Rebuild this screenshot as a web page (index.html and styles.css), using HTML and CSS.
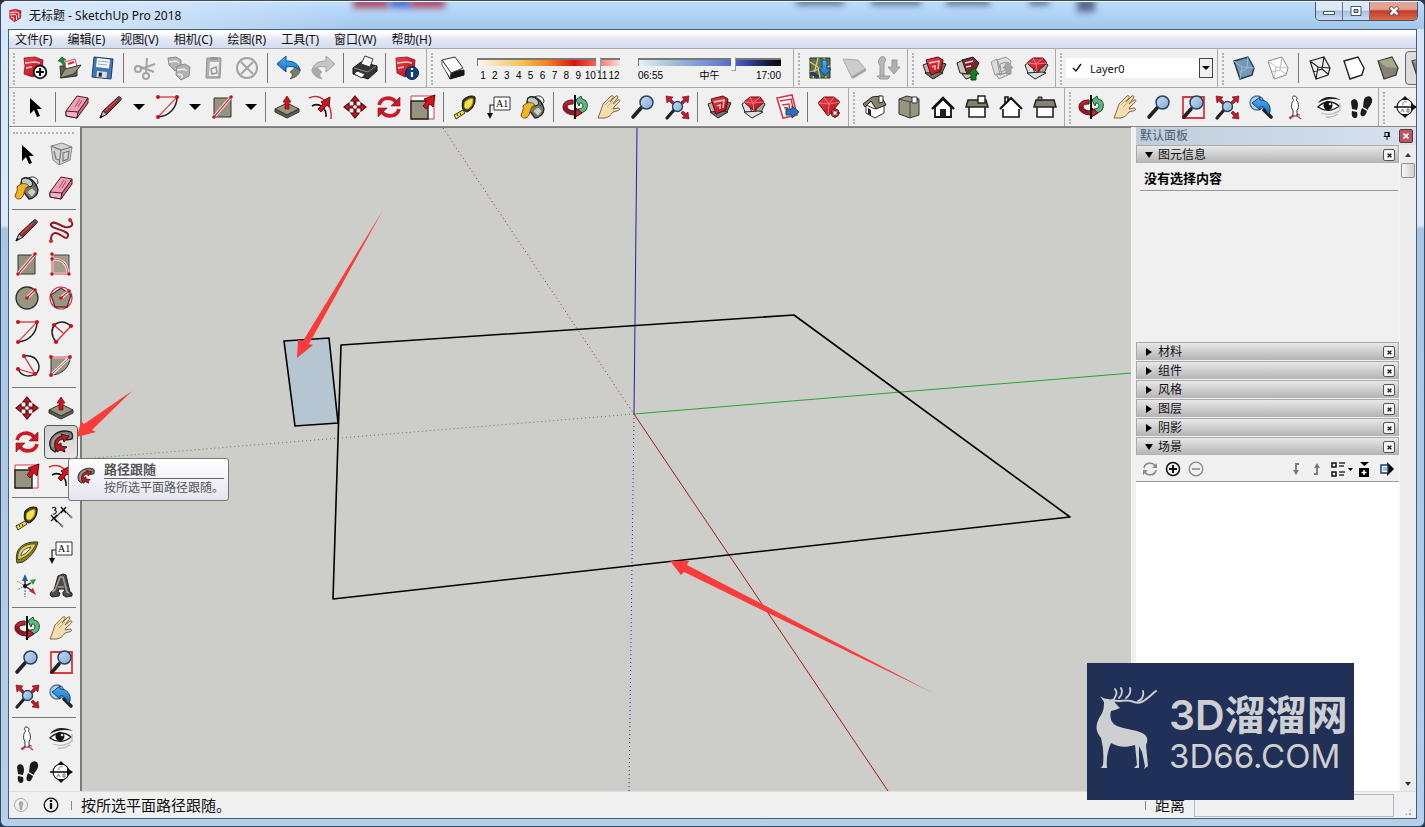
FILE: index.html
```html
<!DOCTYPE html>
<html lang="zh-CN">
<head>
<meta charset="utf-8">
<title>无标题 - SketchUp Pro 2018</title>
<link rel="stylesheet" href="styles.css">
</head>
<body>
<svg class="sprite" aria-hidden="true">
  <defs>
    <linearGradient id="gRed" x1="0" y1="0" x2="1" y2="1"><stop offset="0" stop-color="#f0424c"/><stop offset="1" stop-color="#a80c18"/></linearGradient>
    <linearGradient id="gBlue" x1="0" y1="0" x2="0" y2="1"><stop offset="0" stop-color="#4cb2f5"/><stop offset="1" stop-color="#1670c4"/></linearGradient>
    <linearGradient id="gLens" x1="0" y1="0" x2="1" y2="1"><stop offset="0" stop-color="#c4e0f5"/><stop offset="1" stop-color="#7fa9d0"/></linearGradient>
  </defs>
  <symbol id="su" viewBox="0 0 28 28"><path d="M3 4l11-2 9 3-1 13-11 6-8-6z" fill="url(#gRed)" stroke="#8c0d16" stroke-width=".8"/><path d="M4 8l10-1 5 2v9M4 12l8-1 3 2v8M5 16l5 1v5" fill="none" stroke="#fff" stroke-width="1.600"/></symbol>
  <symbol id="new" viewBox="0 0 28 28"><path d="M3 4l11-1 8 3-1 12-9 5-9-3 1-8z" fill="url(#gRed)" stroke="#8c0d16" stroke-width=".8"/><path d="M4 9l10-1 5 1M5 14l6-1" fill="none" stroke="#ffc9cc" stroke-width="1.600"/><circle cx="19" cy="18" r="6.300" fill="#fff" stroke="#111" stroke-width="1.800"/><path d="M19 14v8M15 18h8" stroke="#111" stroke-width="2.200"/></symbol>
  <symbol id="open" viewBox="0 0 28 28"><path d="M5 12h4l2 2h11v8L6 24z" fill="#5f5e50" stroke="#333"/><path d="M10 8l10-3 2 8-11 2z" fill="#fff" stroke="#c8454d"/><path d="M13 10l6-2" stroke="#d22" stroke-width="2"/><path d="M5 24l5-9 16-4-7 9z" fill="#989582" stroke="#3a392f"/><path d="M3 7l4-4 4 3-3 .5c2 2 2 4 1 7-1-3-2-5-4-6z" fill="#1f8a2c" stroke="#0d5216" stroke-width=".6"/></symbol>
  <symbol id="save" viewBox="0 0 28 28"><path d="M5 3l19 2-2 20-19-2z" fill="#3f78b4" stroke="#1c3f6b"/><path d="M8 4l13 1.400-1 9L7 13z" fill="#f4f6f8"/><path d="M9 7l10 1M9 10l9 1" stroke="#9ab"/><path d="M8 17l10 1-.6 6-10-1z" fill="#ddd"/><path d="M10 18.500l3 .3-.5 4-3-.3z" fill="#222"/></symbol>
  <symbol id="cut" viewBox="0 0 28 28"><g fill="none" stroke="#a3a3a3" stroke-width="2"><circle cx="7" cy="15" r="3"/><circle cx="15" cy="22" r="3"/><path d="M10 15l14-5M15 19l1-15M10 13l13 5"/></g></symbol>
  <symbol id="copy" viewBox="0 0 28 28"><g fill="#b3b3b3" stroke="#8b8b8b"><path d="M3 4l8-1 5 3v8l-6 3-6-6z"/><path d="M12 12l8-2 5 3-1 9-8 4-5-5z"/></g><path d="M4 8l7-1 3 2M12 16l7-1 3 2M13 20l4 1v3" fill="none" stroke="#eee" stroke-width="1.500"/></symbol>
  <symbol id="paste" viewBox="0 0 28 28"><path d="M8 4h14l-1 20H7z" fill="#b2b2b2" stroke="#8e8e8e"/><path d="M11 8h9l-1 14h-9z" fill="#eee"/><path d="M11 3h8v3h-8z" fill="#999"/><path d="M12 15l5-2 1 6-5 1z" fill="none" stroke="#999" stroke-width="1.500"/></symbol>
  <symbol id="delete" viewBox="0 0 28 28"><g fill="none" stroke="#a3a3a3" stroke-width="2"><circle cx="14" cy="14" r="10"/><path d="M8 8l12 12M20 8L8 20"/></g></symbol>
  <symbol id="undo" viewBox="0 0 28 28"><path d="M22 12c5 3 4 10-7 13 3-3 3-5 0-7z" fill="#7b7a6b" stroke="#444" stroke-width=".7"/><path d="M2 10l9-8v5c8 0 13 3 14 10-3-4-7-5-14-4v5z" fill="url(#gBlue)" stroke="#0e4c88"/></symbol>
  <symbol id="redo" viewBox="0 0 28 28"><path d="M6 12c-5 3-4 10 7 13-3-3-3-5 0-7z" fill="#a9a9a9" stroke="#999" stroke-width=".7"/><path d="M26 10l-9-8v5C9 7 4 10 3 17c3-4 7-5 14-4v5z" fill="#c6c6c6" stroke="#a2a2a2"/></symbol>
  <symbol id="print" viewBox="0 0 28 28"><path d="M2 14l8-6 16 4v5l-9 8-15-5z" fill="#353535" stroke="#111"/><path d="M3 14l14 4 8-6" fill="none" stroke="#8c8c8c"/><path d="M10 10l4-8 8 3-3 8z" fill="#fff" stroke="#333"/><path d="M3 20l3-3 8 3-3 4z" fill="#fff" stroke="#333"/></symbol>
  <symbol id="info" viewBox="0 0 28 28"><path d="M3 4l11-1 8 3-1 12-9 5-8-4z" fill="url(#gRed)" stroke="#8c0d16" stroke-width=".8"/><path d="M4 9l10-1 5 1M5 14l6-1" fill="none" stroke="#ffc9cc" stroke-width="1.600"/><circle cx="19" cy="19" r="6.500" fill="#12407c" stroke="#0b2850"/><path d="M19 18v5M19 14v2" stroke="#fff" stroke-width="2.200"/></symbol>
  <symbol id="shadow" viewBox="0 0 28 28"><path d="M3 8l8 17 14-4v-5l-12 2z" fill="#181818" stroke="#111"/><path d="M3 6l13-3 8 11-12 5z" fill="#fff" stroke="#333"/><path d="M3 6v5l8 13 1-5z" fill="#fff" stroke="#333" stroke-width=".8"/></symbol>
  <symbol id="select" viewBox="0 0 28 28"><path d="M9 5v16l4-4 3 7 3-1-3-7h5z" fill="#000"/></symbol>
  <symbol id="eraser" viewBox="0 0 28 28"><path d="M3 18L14 3l11 2-9 14-2 6-11-2z" fill="#f0a0b6" stroke="#4c1b28"/><path d="M3 18l12 1-1 6-11-2z" fill="#f4b3c4" stroke="#4c1b28"/><path d="M15 19L25 5v5L14 25z" fill="#cc6a86" stroke="#4c1b28"/><path d="M12 14l5-8M15 14l4-7" stroke="#a84c66"/></symbol>
  <symbol id="pencil" viewBox="0 0 28 28"><path d="M3 25l3-7L21 4c2-1 4 1 3 3L10 21z" fill="#9f2930" stroke="#391114"/><path d="M3 25l3-7 4 3z" fill="#c8b79f" stroke="#333"/><path d="M3 25l1-3 2 1.500z" fill="#000"/><path d="M8 18L20 7" stroke="#e0636a"/><path d="M19 6l2-2c2-1 4 1 3 3l-2 2z" fill="#555"/></symbol>
  <symbol id="arc" viewBox="0 0 28 28"><path d="M24 4c0 11-8 19-19 20" fill="none" stroke="#222" stroke-width="1.500"/><path d="M5 4h19L5 24" fill="none" stroke="#dd4a52" stroke-width="1.300"/><g fill="#c4131f"><circle cx="5" cy="4" r="2"/><circle cx="24" cy="4" r="2"/><circle cx="5" cy="24" r="2"/></g></symbol>
  <symbol id="rect" viewBox="0 0 28 28"><path d="M5 5h17v19H5z" fill="#95927e" stroke="#333"/><path d="M5 24L22 4" stroke="#fff" stroke-width="3"/><path d="M5 24L22 4" stroke="#d8323c" stroke-width="1.300"/><circle cx="5" cy="24" r="1.800" fill="#c4131f"/><circle cx="22" cy="4" r="1.800" fill="#c4131f"/></symbol>
  <symbol id="pushpull" viewBox="0 0 28 28"><path d="M2 16l12-6 12 6-12 6z" fill="#98957f" stroke="#333"/><path d="M2 16v3l12 6 12-6v-3l-12 6z" fill="#625f50" stroke="#333"/><path d="M14 3l4 6h-2v7h-4V9h-2z" fill="#d1141f" stroke="#70090f" stroke-width=".7"/></symbol>
  <symbol id="offset" viewBox="0 0 28 28"><path d="M2 5C13 0 26 10 24 26" fill="none" stroke="#cf2b35" stroke-width="1.500"/><path d="M5 13c7-4 15 2 14 11" fill="none" stroke="#111" stroke-width="1.500"/><path d="M11 16l5-5-2-2 9-5-1 10-2-2-6 7z" fill="#d1141f" stroke="#70090f"/></symbol>
  <symbol id="move" viewBox="0 0 28 28"><path d="M14 3l4 5h-3v5h5v-3l5 4-5 4v-3h-5v5h3l-4 5-4-5h3v-5H8v3l-5-4 5-4v3h5V8h-3z" fill="#c81a24" stroke="#5d0a10" stroke-width="1.200"/><circle cx="14" cy="14" r="1.800" fill="#f1f1f1"/></symbol>
  <symbol id="rotate" viewBox="0 0 28 28"><g fill="none" stroke="#cb1a25" stroke-width="3.600"><path d="M4 12C6 4 16 3 21 9"/><path d="M24 16c-2 8-12 9-17 3"/></g><path d="M25 4v9h-9z" fill="#cb1a25" stroke="#7c0d15" stroke-width=".6"/><path d="M3 24v-9h9z" fill="#cb1a25" stroke="#7c0d15" stroke-width=".6"/></symbol>
  <symbol id="scale" viewBox="0 0 28 28"><path d="M2 3h23v23H2z" fill="#fff" stroke="#cf3b43"/><path d="M2 8h17v18H2z" fill="#96937f" stroke="#222" stroke-width="1.400"/><path d="M14 13l4-5-3-2 11-4-2 12-3-3-4 5z" fill="#d1141f" stroke="#70090f"/></symbol>
  <symbol id="tape" viewBox="0 0 28 28"><path d="M12 7c4-4 9-5 12-3 1 7-3 13-8 15-4-1-6-4-4-12z" fill="#3c3a20" stroke="#111"/><path d="M14 9c3-3 6-4 8-3 0 5-2 9-6 10-3 0-3-3-2-7z" fill="#f3e24a" stroke="#c3a719"/><path d="M3 22l9-5 2 3-9 6z" fill="#f2dc28" stroke="#333"/><path d="M6 21l1 2M9 20l1 2" stroke="#333"/></symbol>
  <symbol id="note" viewBox="0 0 28 28"><path d="M9 4h16v13H9z" fill="#fff" stroke="#333"/><path d="M9 12H5v10" fill="none" stroke="#222" stroke-width="1.200"/><path d="M2 20h6l-3 6z" fill="#111"/></symbol>
  <symbol id="paint" viewBox="0 0 28 28"><path d="M9 5c6-4 14 2 16 11 0 5-5 9-9 9L7 13z" fill="#6e7873" stroke="#222" stroke-width="1.300"/><ellipse cx="14" cy="8.500" rx="6" ry="4" transform="rotate(25 14 8.500)" fill="#bfc9c5" stroke="#222"/><path d="M14 5c5-4 11-2 11 4l-4 4" fill="none" stroke="#333"/><path d="M4 13c5-5 9-4 12-1-4 1-4 4-6 10-2 4-7 4-8 0 1-3 3-5 2-9z" fill="#efb525" stroke="#795411"/><path d="M14 18l5-4 4 4-4 5z" fill="#d5cfb0" stroke="#666" stroke-width=".6"/></symbol>
  <symbol id="orbit" viewBox="0 0 28 28"><path d="M15 7l5-4 1 3c5 1 6 5 5 9-1 3-4 5-8 5l-1-4c3 0 5-1 5-3s-1-3-3-3l-1 3z" fill="#5fb783" stroke="#174f2c"/><path d="M12 7C5 7 2 10 2 14c0 5 6 8 12 8l-1 3 8-5-6-5v3c-5 0-8-1-9-4 0-2 2-3 6-3z" fill="#c3202e" stroke="#4d0a12"/><path d="M2 14c0 5 5 7 10 8v-4c-4-1-8-3-6-7z" fill="#8e1622"/><path d="M14 2v24" stroke="#111" stroke-width="2"/></symbol>
  <symbol id="pan" viewBox="0 0 28 28"><path d="M3 25l3-8 2-6 8-8c1.500-1 2.500 0 2 1.500L15 9l6-6c1.500-1 2.500.5 1.500 2L18 11l5-4c2-.8 2.500 1 1 2.300L19 14l-1 2 5-1c2 0 2 2 .5 2.500L18 19c-2 3-4 5-8 6z" fill="#f4ddb0" stroke="#7b6c4b"/><path d="M10 12l5-5M12 14l6-6" stroke="#b39c6b" stroke-width=".7"/></symbol>
  <symbol id="zoom" viewBox="0 0 28 28"><path d="M4 24l8-9" stroke="#222" stroke-width="3.600" stroke-linecap="round"/><circle cx="17.500" cy="9.500" r="6.500" fill="url(#gLens)" stroke="#28445f" stroke-width="1.500"/></symbol>
  <symbol id="zoomwin" viewBox="0 0 28 28"><path d="M4 4h21v21H4z" fill="none" stroke="#dc3741" stroke-width="1.800"/><path d="M5 24l7-8" stroke="#222" stroke-width="3.600" stroke-linecap="round"/><circle cx="17.500" cy="9.500" r="6.500" fill="url(#gLens)" stroke="#28445f" stroke-width="1.500"/></symbol>
  <symbol id="extents" viewBox="0 0 28 28"><path d="M4 25l7-8" stroke="#222" stroke-width="3.200" stroke-linecap="round"/><circle cx="14.500" cy="13.500" r="5" fill="url(#gLens)" stroke="#28445f" stroke-width="1.400"/><g fill="#c5192a" stroke="#6a0b16" stroke-width=".6"><path d="M3 3l7 1-2 2 3 3-2 2-3-3-2 2z"/><path d="M26 3l-7 1 2 2-3 3 2 2 3-3 2 2z"/><path d="M26 26l-7-1 2-2-3-3 2-2 3 3 2-2z"/></g></symbol>
  <symbol id="previous" viewBox="0 0 28 28"><circle cx="10" cy="10" r="7" fill="#b6d2ea" stroke="#56738e" stroke-width="1.400"/><path d="M17 17l7 7" stroke="#222" stroke-width="3.600" stroke-linecap="round"/><path d="M5 10l8-6v3c7 0 11 5 10 12l-2 2-2-4c-2-3-4-4-6-3v3z" fill="url(#gBlue)" stroke="#0e3f73"/></symbol>
  <symbol id="comp" viewBox="0 0 28 28"><path d="M3 11l5-2 4 12-6-2z" fill="#b9b6aa" stroke="#222"/><path d="M20 8l6 2-4 9-5 3z" fill="#77756b" stroke="#222"/><path d="M5 19l15-1 3 1-10 6z" fill="#74726a" stroke="#222"/><path d="M6 6l12-3 5 3-2 11-10 4z" fill="url(#gRed)" stroke="#550a10"/><path d="M9 9l10-2-1 8M12 13l3-1v4" fill="none" stroke="#ffd9da" stroke-width="1.300"/></symbol>
  <symbol id="gembox" viewBox="0 0 28 28"><path d="M3 11l6-4 4 13-7-1z" fill="#e2dfd8" stroke="#222"/><path d="M19 6l7 5-4 8-6 2z" fill="#aaa79b" stroke="#222"/><path d="M5 19l15-1 4 1-11 6z" fill="#ddd" stroke="#222"/><path d="M5 9l6-5 10 0 4 5-10 9z" fill="url(#gRed)" stroke="#550a10"/><path d="M5 9l9 1 11-1M11 4l3 6 7-6M14 10l1 8" fill="none" stroke="#ff9298" stroke-width=".8"/></symbol>
  <symbol id="upload" viewBox="0 0 28 28"><path d="M3 9l6-3 5 14-8-1zM8 20l12-1 3 2-11 4z" fill="#c8c5bb" stroke="#222"/><path d="M8 6l11-3 6 6-4 8-8 3z" fill="#7c272b" stroke="#222"/><path d="M11 9l8-2M12 13l5-1" stroke="#ddd" stroke-width="1.500"/><path d="M20 14l5 6h-3v6h-5v-6h-3z" fill="#168126" stroke="#0a4b14"/></symbol>
  <symbol id="uploadoff" viewBox="0 0 28 28"><g fill="#dcdcdc" stroke="#999"><path d="M3 8l6-3 5 15-7 1zM8 20l11-1 3 1-11 5zM9 6l9-3 5 4-3 11-8 3z"/><path d="M12 10l6-2-1 8-4 2z"/><path d="M20 8l5 6h-2v6h-5v-6h-3z" fill="#a5a5a5"/></g></symbol>
  <symbol id="layout" viewBox="0 0 28 28"><path d="M4 5l15-3 5 20-14 3z" fill="#fff" stroke="#d53640" stroke-width="1.600"/><path d="M7 8l11-2 2 9M9 12l7-1 1 7M11 15l3-.5 1 4" fill="none" stroke="#d53640" stroke-width="1.500"/><path d="M13 16h6v-3l7 6-7 6v-3h-6z" fill="#2672bd" stroke="#173c66"/></symbol>
  <symbol id="gem" viewBox="0 0 28 28"><path d="M3 10l6-6h10l6 5-12 14z" fill="url(#gRed)" stroke="#6d0a12"/><path d="M3 10l11 1 11-2M9 4l5 7 5-7M14 11l-1 12" fill="none" stroke="#ff858d" stroke-width=".8"/><circle cx="20" cy="20" r="4" fill="#c24a53" stroke="#7e1b22"/><path d="M20 15v10M15 20h10" stroke="#7e1b22" stroke-width="1.500"/><circle cx="20" cy="20" r="1.700" fill="#fff"/></symbol>
  <symbol id="iso" viewBox="0 0 28 28"><path d="M5 12l9 4 9-4v8l-9 5-9-5z" fill="#fff" stroke="#333"/><path d="M2 11l9-7 9-1 5 9-10 4-5-8-6 6z" fill="#85826f" stroke="#222"/><path d="M18 3h4v6l-4 1z" fill="#fff" stroke="#333"/><path d="M7 15l3 2v6l-3-2z" fill="#222"/></symbol>
  <symbol id="top" viewBox="0 0 28 28"><path d="M4 6l8-3 12 3v16l-9 3-11-4z" fill="#98957f" stroke="#333"/><path d="M4 6l11 3v16M15 9l9-3" fill="none" stroke="#444"/><path d="M17 4h5v6h-5z" fill="#fff" stroke="#333"/></symbol>
  <symbol id="front" viewBox="0 0 28 28"><path d="M6 14l8-8 8 8v10H6z" fill="#fff" stroke="#111" stroke-width="1.800"/><path d="M3 16L14 5l11 11" fill="none" stroke="#111" stroke-width="2.400"/><path d="M11 16h6v8h-6z" fill="#222"/></symbol>
  <symbol id="right" viewBox="0 0 28 28"><path d="M6 13h16v11H6z" fill="#fff" stroke="#222" stroke-width="1.600"/><path d="M5 7h18l2 7H3z" fill="#85826f" stroke="#222" stroke-width="1.500"/><path d="M15 3h7v7h-7z" fill="#fff" stroke="#222" stroke-width="1.400"/></symbol>
  <symbol id="back" viewBox="0 0 28 28"><path d="M6 15v9h16v-9M8 10V4h3v4" fill="#fff" stroke="#111" stroke-width="1.600"/><path d="M3 16L14 5l11 11" fill="#fff" stroke="#111" stroke-width="2.200"/></symbol>
  <symbol id="left" viewBox="0 0 28 28"><path d="M6 13h16v11H6z" fill="#fff" stroke="#222" stroke-width="1.600"/><path d="M5 7h18l2 7H3z" fill="#85826f" stroke="#222" stroke-width="1.500"/><path d="M7 4h4v3H7z" fill="#85826f" stroke="#222"/></symbol>
  <symbol id="person" viewBox="0 0 28 28"><path d="M8 25l6-4 6 5M9 26l5-5 5 1" fill="none" stroke="#d92a36" stroke-width="1.200"/><path d="M13 3c3 0 4 3 2 4 2 1 3 5 2 9l-1 1v6h-4v-6l-1-1c-1-4 0-8 2-9-2-1-2-4 0-4z" fill="#fff" stroke="#333"/></symbol>
  <symbol id="eye" viewBox="0 0 28 28"><path d="M3 10C8 2 19 3 26 7c-8-2-16-1-23 3z" fill="#222"/><path d="M3 14c6-6 14-7 21-1-6 5-14 6-21 1z" fill="#fff" stroke="#222" stroke-width="1.400"/><circle cx="13" cy="12.500" r="4.500" fill="#111"/><circle cx="15" cy="11" r="1.300" fill="#ddd"/><path d="M6 20c6 2 13 2 19-3M11 24c5 1 9-1 12-3M25 10v8" fill="none" stroke="#bbb" stroke-width="1.300"/></symbol>
  <symbol id="walk" viewBox="0 0 28 28"><path d="M5 7c4-2 6 1 6 5 0 2-1 4-1 5l-5-1c0-3-2-7 0-9zM5 18l5 1c1 4 0 6-2 6s-4-2-3-7zM19 4c4-2 7 1 6 5s-4 5-4 8l-5-3c1-5 0-8 3-10zM15 15l5 3c-1 4-3 6-5 5-2 0-2-4 0-8z" fill="#1b1b1b"/></symbol>
  <symbol id="section" viewBox="0 0 28 28"><circle cx="14" cy="14" r="8" fill="#fff" stroke="#222" stroke-width="1.200"/><path d="M3 14h22" stroke="#111" stroke-width="1.600"/><path d="M14 3l4 4h-8zM14 25l4-4h-8zM26 14l-6-4v8z" fill="#111"/><path d="M12 12c-1-3 2-4 4-3M10 19l1.500-3 1.500 3M16 16v3h2v-3z" fill="none" stroke="#777"/></symbol>
  <symbol id="mapadd" viewBox="0 0 28 28"><path d="M4 4h20v20H4z" fill="#647146" stroke="#263021"/><path d="M4 8l8 5 2 11M12 4L7 24M4 18l20-6M18 4l2 20" fill="none" stroke="#d9ce91" stroke-width="1.200"/><path d="M4 20c5-2 6 1 8 4" stroke="#233f66" stroke-width="3"/><path d="M16 6h5v9h4l-6 7-6-7h3z" fill="url(#gBlue)" stroke="#164a80"/></symbol>
  <symbol id="terrain" viewBox="0 0 28 28"><path d="M3 5l15 1 8 10-14 8z" fill="#ccc" stroke="#aaa"/><path d="M12 22l14-8v3l-13 8z" fill="#a5a5a5"/></symbol>
  <symbol id="geo" viewBox="0 0 28 28"><path d="M7 3c4-2 6 3 3 6v13H6V11C4 9 4 5 7 3zM3 22h13l-2 3H6z" fill="#b9b9b9" stroke="#999"/><path d="M18 6h5v7h3l-6 7-6-7h4z" fill="#b1b1b1" stroke="#999"/></symbol>
  <symbol id="xray" viewBox="0 0 28 28"><path d="M4 7l14-4 6 11-2 7-12 4z" fill="#7798b3" stroke="#213a50" stroke-width="1.400"/><path d="M4 7l8 6 12 1M12 13l-2 12M18 3l-1 12-7 3" fill="none" stroke="#9cbad2"/></symbol>
  <symbol id="backedge" viewBox="0 0 28 28"><g fill="#fff" stroke="#888"><path d="M4 7l14-4 6 11-2 7-12 4z"/><path d="M4 7l8 6 12 1M12 13l-2 12M18 3l-2 13 6 4M16 16l-8 2" fill="none" stroke="#bbb"/></g></symbol>
  <symbol id="wire" viewBox="0 0 28 28"><path d="M4 7l14-4 6 11-2 7-12 4zM4 7l8 6 12 1M12 13l-2 12M18 3l-2 12 6 5M16 15l-9 3" fill="none" stroke="#222" stroke-width="1.200"/></symbol>
  <symbol id="hidden" viewBox="0 0 28 28"><path d="M4 7l14-4 6 11-2 7-12 4z" fill="#fff" stroke="#222" stroke-width="1.400"/></symbol>
  <symbol id="shaded" viewBox="0 0 28 28"><path d="M4 7l14-4 6 11-2 7-12 4z" fill="#858371" stroke="#3a392f" stroke-width="1.200"/><path d="M5 7l13-3 5 10-11-1z" fill="#aaa78f"/></symbol>
  <symbol id="makecomp" viewBox="0 0 28 28"><path d="M4 6l11-3 10 4-2 13-11 5-6-5z" fill="#d2d2d2" stroke="#888"/><path d="M4 6l10 4 11-3M14 10l-2 15M7 11l2 8 3 1M16 13l6-2-1 8-5 2z" fill="none" stroke="#777" stroke-width="1.200"/></symbol>
  <symbol id="freehand" viewBox="0 0 28 28"><path d="M23 4C28 9 24 12 18 11C12 9 6 4 4 8C2 13 23 14 21 20C19 26 13 16 8 17C4 18 4 21 4 25" fill="none" stroke="#8c1d25" stroke-width="2"/><circle cx="23" cy="4" r="2" fill="#d5222d"/><circle cx="4" cy="25" r="2" fill="#d5222d"/></symbol>
  <symbol id="rotrect" viewBox="0 0 28 28"><path d="M5 5h17v19H5z" fill="#a29c8a" stroke="#444"/><path d="M5 24V4M5 9c10 0 15 4 16 14M5 24h17" fill="none" stroke="#fff" stroke-width="2.600"/><path d="M5 24V4M5 9c10 0 15 4 16 14M5 24h17" fill="none" stroke="#d8323c"/><g fill="#c4131f"><circle cx="5" cy="4" r="1.700"/><circle cx="5" cy="9" r="1.700"/><circle cx="5" cy="24" r="1.700"/><circle cx="22" cy="24" r="1.700"/></g></symbol>
  <symbol id="circle" viewBox="0 0 28 28"><circle cx="14" cy="14" r="11" fill="#989681" stroke="#333" stroke-width="1.300"/><path d="M14 14l8-8" stroke="#fff" stroke-width="3"/><path d="M14 14l8-8" stroke="#d5202c" stroke-width="1.200"/><circle cx="14" cy="14" r="1.800" fill="#c4131f"/><circle cx="22" cy="6" r="1.800" fill="#c4131f"/></symbol>
  <symbol id="polygon" viewBox="0 0 28 28"><circle cx="14" cy="14" r="11" fill="none" stroke="#cf3640" stroke-width="1.200"/><path d="M4 11l10-7 10 7-4 12H8z" fill="#989681" stroke="#672a2d" stroke-width="1.300"/><path d="M14 14l8-7" stroke="#fff" stroke-width="3"/><path d="M14 14l8-7" stroke="#d5202c" stroke-width="1.200"/><circle cx="14" cy="14" r="1.800" fill="#c4131f"/><circle cx="22" cy="7" r="1.800" fill="#c4131f"/></symbol>
  <symbol id="arc2" viewBox="0 0 28 28"><path d="M9 24C-2 10 12-3 24 8" fill="none" stroke="#222" stroke-width="1.500"/><path d="M9 24L24 8M7 7l9 8" stroke="#d52b36" stroke-width="1.300"/><g fill="#c4131f"><circle cx="9" cy="24" r="2.100"/><circle cx="24" cy="8" r="2.100"/><circle cx="7" cy="7" r="2.100"/></g></symbol>
  <symbol id="arc3" viewBox="0 0 28 28"><path d="M11 4c15-2 19 14 11 18C16 26 8 24 5 17" fill="none" stroke="#222" stroke-width="1.500"/><path d="M11 4l11 18L5 17" fill="none" stroke="#d52b36" stroke-width="1.300"/><g fill="#c4131f"><circle cx="11" cy="4" r="2.100"/><circle cx="22" cy="22" r="2.100"/><circle cx="5" cy="17" r="2.100"/></g></symbol>
  <symbol id="pie" viewBox="0 0 28 28"><path d="M4 5h19c0 10-8 18-19 18z" fill="#989681" stroke="#333"/><path d="M4 23L23 5H4" fill="none" stroke="#fff" stroke-width="2.600"/><path d="M4 23L23 5H4" fill="none" stroke="#d8323c"/><g fill="#c4131f"><circle cx="4" cy="5" r="1.900"/><circle cx="23" cy="5" r="1.900"/><circle cx="4" cy="23" r="1.900"/></g></symbol>
  <symbol id="follow" viewBox="0 0 28 28"><path d="M4 21C-1 10 11 0 24 4c2 2 2 4 1 7l-5 1c-1-3-2-4-5-3-5 2-7 6-5 11l-2 4z" fill="#7e7973" stroke="#222" stroke-width="1.300"/><path d="M6 19C4 10 12 4 21 7" fill="none" stroke="#a8a39b" stroke-width="1.500"/><path d="M8 19c-1-6 2-10 7-11l-1-2 8 2-5 6-1-3c-4 1-6 3-5 6l3-2v3l6 1-3 2 1 3-5-2-3 2z" fill="#b81c28" stroke="#4c0a10"/></symbol>
  <symbol id="dimension" viewBox="0 0 28 28"><path d="M7 15l9-9M7 14l8 8M16 5l8 8" stroke="#444" stroke-width="1.200"/><path d="M4 11l6 7M4 17l6-6M14 3l5 6M14 9l5-6" stroke="#111" stroke-width="1.300"/><path d="M5 4c4-2 5 2 2 2 4 0 2 5-1 4" fill="none" stroke="#222" stroke-width="1.200"/><path d="M14 21l2 2M23 12l2 2" stroke="#5da05e" stroke-width="2"/></symbol>
  <symbol id="protractor" viewBox="0 0 28 28"><path d="M4 25C1 12 9 3 25 4 23 14 15 21 10 24z" fill="#8e811c" stroke="#333"/><path d="M5 22C3 12 11 5 23 6 20 13 14 19 5 22z" fill="#ddcc4e" stroke="#544d0e"/><path d="M8 18c0-4 4-8 10-9-2 4-6 7-10 9z" fill="#f1f1f1" stroke="#555"/></symbol>
  <symbol id="axes" viewBox="0 0 28 28"><path d="M12 14V6M12 14l6-3M12 14l6 4" stroke="#333" stroke-width="1.500"/><path d="M12 2l3 7H9z" fill="#205f92"/><path d="M17 8l6-1-3 6z" fill="#2e9c40"/><path d="M16 19l4-3 3 7z" fill="#c02a31"/><path d="M12 15v10" stroke="#84b0da" stroke-width="2" stroke-dasharray="2 1"/><path d="M4 9l8 5-8 4" fill="none" stroke="#bd6c6c" stroke-dasharray="2 1"/><circle cx="12" cy="14" r="2" fill="#111"/></symbol>
  <symbol id="threed" viewBox="0 0 28 28"><path d="M4 20l3-2 4-14 5-2 3 1 4 17 2 1v3l-6 1-3-2v-3l2-1-1-2h-5l-1 3 2 1-1 3-7 1-2-2z" fill="#4f4a45" stroke="#222"/><path d="M5 20l3-2 5-13h3l4 15 2 1M11 15h6" fill="none" stroke="#a59f97" stroke-width="1.600"/></symbol>
  <symbol id="check" viewBox="0 0 12 12"><path d="M2 6l3 3 5-7" fill="none" stroke="#111" stroke-width="1.400"/></symbol>
  <symbol id="x" viewBox="0 0 12 12"><path d="M4 4l4 4M8 4l-4 4" stroke="#222" stroke-width="1.600"/></symbol>
</svg>

<div class="window">
  <header class="titlebar">
    <i class="smudge smudge-red"></i><i class="smudge smudge-blue"></i><i class="smudge smudge-red smudge-red-end"></i>
    <i class="smudge smudge-dark s1"></i><i class="smudge smudge-dark s2"></i><i class="smudge smudge-dark s3"></i><i class="smudge smudge-dark s4"></i><i class="smudge smudge-dark s5"></i>
    <svg class="app-icon"><use href="#su"/></svg>
    <h1 class="title">无标题 - SketchUp Pro 2018</h1>
    <div class="caption-buttons">
      <button class="cap cap-min" aria-label="最小化"><svg viewBox="0 0 14 10"><path d="M1.500 5.500h11v3h-11z" fill="#fff" stroke="#44566b"/></svg></button>
      <button class="cap cap-max" aria-label="最大化"><svg viewBox="0 0 14 10"><path d="M2 .5h10v9H2z" fill="#fff" stroke="#44566b"/><path d="M5 3.500h4v3H5z" fill="#9db6d2" stroke="#44566b"/></svg></button>
      <button class="cap cap-close" aria-label="关闭"><svg viewBox="0 0 14 10"><path d="M3 1l8 8M11 1L3 9" stroke="#5a3838" stroke-width="4"/><path d="M3.500 1.500l7 7M10.500 1.500l-7 7" stroke="#fff" stroke-width="2.500"/></svg></button>
    </div>
  </header>

  <div class="client">
    <nav class="menubar">
      <button>文件(F)</button><button>编辑(E)</button><button>视图(V)</button><button>相机(C)</button><button>绘图(R)</button><button>工具(T)</button><button>窗口(W)</button><button>帮助(H)</button>
    </nav>

    <div class="toolbar">
      <div class="group">
        <button class="tool" aria-label="新建"><svg><use href="#new"/></svg></button>
        <button class="tool" aria-label="打开"><svg><use href="#open"/></svg></button>
        <button class="tool" aria-label="保存"><svg><use href="#save"/></svg></button>
        <span class="sep"></span>
        <button class="tool" aria-label="剪切"><svg><use href="#cut"/></svg></button>
        <button class="tool" aria-label="复制"><svg><use href="#copy"/></svg></button>
        <button class="tool" aria-label="粘贴"><svg><use href="#paste"/></svg></button>
        <button class="tool" aria-label="删除"><svg><use href="#delete"/></svg></button>
        <span class="sep"></span>
        <button class="tool" aria-label="撤销"><svg><use href="#undo"/></svg></button>
        <button class="tool" aria-label="重做"><svg><use href="#redo"/></svg></button>
        <span class="sep"></span>
        <button class="tool" aria-label="打印"><svg><use href="#print"/></svg></button>
        <span class="sep"></span>
        <button class="tool" aria-label="模型信息"><svg><use href="#info"/></svg></button>
      </div>
      <div class="group">
        <button class="tool" aria-label="阴影"><svg><use href="#shadow"/></svg></button>
        <div class="sliders">
          <div class="slider">
            <input class="range range-month" type="range" min="0" max="100" value="86" aria-label="日期">
            <div class="ticks"><span>1</span><span>2</span><span>3</span><span>4</span><span>5</span><span>6</span><span>7</span><span>8</span><span>9</span><span>10</span><span>11</span><span>12</span></div>
          </div>
          <div class="slider">
            <input class="range range-time" type="range" min="0" max="100" value="67" aria-label="时间">
            <div class="times"><span>06:55</span><span>中午</span><span>17:00</span></div>
          </div>
        </div>
      </div>
      <div class="group">
        <button class="tool" aria-label="添加位置"><svg><use href="#mapadd"/></svg></button>
        <button class="tool" aria-label="切换地形"><svg><use href="#terrain"/></svg></button>
        <button class="tool" aria-label="照片纹理"><svg><use href="#geo"/></svg></button>
      </div>
      <div class="group">
        <button class="tool" aria-label="获取模型"><svg><use href="#comp"/></svg></button>
        <button class="tool" aria-label="共享模型"><svg><use href="#upload"/></svg></button>
        <button class="tool" aria-label="共享组件"><svg><use href="#uploadoff"/></svg></button>
        <button class="tool" aria-label="扩展程序库"><svg><use href="#gembox"/></svg></button>
      </div>
      <div class="group">
        <div class="layer">
          <svg class="layer-check"><use href="#check"/></svg>
          <select aria-label="图层"><option>Layer0</option></select>
          <span class="layer-arrow"></span>
        </div>
      </div>
      <div class="group">
        <button class="tool" aria-label="X 光透视"><svg><use href="#xray"/></svg></button>
        <button class="tool" aria-label="后边线"><svg><use href="#backedge"/></svg></button>
        <span class="sep"></span>
        <button class="tool" aria-label="线框"><svg><use href="#wire"/></svg></button>
        <button class="tool" aria-label="消隐"><svg><use href="#hidden"/></svg></button>
        <button class="tool" aria-label="阴影模式"><svg><use href="#shaded"/></svg></button>
        <button class="tool pressed" aria-label="材质贴图"><svg><use href="#shaded"/></svg></button>
      </div>
    </div>

    <div class="toolbar">
      <div class="group">
        <button class="tool" aria-label="选择"><svg><use href="#select"/></svg></button>
        <span class="sep"></span>
        <button class="tool" aria-label="擦除"><svg><use href="#eraser"/></svg></button>
        <button class="tool" aria-label="直线"><svg><use href="#pencil"/></svg></button>
        <button class="more" aria-label="更多直线"></button>
        <button class="tool" aria-label="圆弧"><svg><use href="#arc"/></svg></button>
        <button class="more" aria-label="更多圆弧"></button>
        <button class="tool" aria-label="矩形"><svg><use href="#rect"/></svg></button>
        <button class="more" aria-label="更多形状"></button>
        <span class="sep"></span>
        <button class="tool" aria-label="推拉"><svg><use href="#pushpull"/></svg></button>
        <button class="tool" aria-label="偏移"><svg><use href="#offset"/></svg></button>
        <button class="tool" aria-label="移动"><svg><use href="#move"/></svg></button>
        <button class="tool" aria-label="旋转"><svg><use href="#rotate"/></svg></button>
        <button class="tool" aria-label="缩放"><svg><use href="#scale"/></svg></button>
        <span class="sep"></span>
        <button class="tool" aria-label="卷尺"><svg><use href="#tape"/></svg></button>
        <button class="tool" aria-label="文字"><svg viewBox="0 0 28 28"><use href="#note"/><text class="note-text" x="11" y="14">A1</text></svg></button>
        <button class="tool" aria-label="材质"><svg><use href="#paint"/></svg></button>
        <span class="sep"></span>
        <button class="tool" aria-label="环绕观察"><svg><use href="#orbit"/></svg></button>
        <button class="tool" aria-label="平移"><svg><use href="#pan"/></svg></button>
        <button class="tool" aria-label="视图缩放"><svg><use href="#zoom"/></svg></button>
        <button class="tool" aria-label="充满视窗"><svg><use href="#extents"/></svg></button>
        <span class="sep"></span>
        <button class="tool" aria-label="模型库"><svg><use href="#comp"/></svg></button>
        <button class="tool" aria-label="扩展库"><svg><use href="#gembox"/></svg></button>
        <button class="tool" aria-label="发送到 LayOut"><svg><use href="#layout"/></svg></button>
        <span class="sep"></span>
        <button class="tool" aria-label="扩展管理"><svg><use href="#gem"/></svg></button>
      </div>
      <div class="group">
        <button class="tool" aria-label="等轴"><svg><use href="#iso"/></svg></button>
        <button class="tool" aria-label="俯视"><svg><use href="#top"/></svg></button>
        <button class="tool" aria-label="前视"><svg><use href="#front"/></svg></button>
        <button class="tool" aria-label="右视"><svg><use href="#right"/></svg></button>
        <button class="tool" aria-label="后视"><svg><use href="#back"/></svg></button>
        <button class="tool" aria-label="左视"><svg><use href="#left"/></svg></button>
      </div>
      <div class="group group-snug">
        <button class="tool" aria-label="环绕观察"><svg><use href="#orbit"/></svg></button>
        <button class="tool" aria-label="平移"><svg><use href="#pan"/></svg></button>
        <button class="tool" aria-label="视图缩放"><svg><use href="#zoom"/></svg></button>
        <button class="tool" aria-label="缩放窗口"><svg><use href="#zoomwin"/></svg></button>
        <button class="tool" aria-label="充满视窗"><svg><use href="#extents"/></svg></button>
        <button class="tool" aria-label="上一个"><svg><use href="#previous"/></svg></button>
        <button class="tool" aria-label="定位相机"><svg><use href="#person"/></svg></button>
        <button class="tool" aria-label="绕轴旋转"><svg><use href="#eye"/></svg></button>
        <button class="tool" aria-label="漫游"><svg><use href="#walk"/></svg></button>
      </div>
      <div class="group">
        <button class="tool" aria-label="剖切面"><svg><use href="#section"/></svg></button>
      </div>
    </div>

    <main class="workspace">
      <aside class="palette">
        <div class="pair">
          <button class="tool" aria-label="选择"><svg><use href="#select"/></svg></button><button class="tool" aria-label="制作组件"><svg><use href="#makecomp"/></svg></button>
          <button class="tool" aria-label="材质"><svg><use href="#paint"/></svg></button><button class="tool" aria-label="擦除"><svg><use href="#eraser"/></svg></button>
        </div>
        <div class="pair">
          <button class="tool" aria-label="直线"><svg><use href="#pencil"/></svg></button><button class="tool" aria-label="手绘线"><svg><use href="#freehand"/></svg></button>
          <button class="tool" aria-label="矩形"><svg><use href="#rect"/></svg></button><button class="tool" aria-label="旋转矩形"><svg><use href="#rotrect"/></svg></button>
          <button class="tool" aria-label="圆"><svg><use href="#circle"/></svg></button><button class="tool" aria-label="多边形"><svg><use href="#polygon"/></svg></button>
          <button class="tool" aria-label="圆弧"><svg><use href="#arc"/></svg></button><button class="tool" aria-label="两点圆弧"><svg><use href="#arc2"/></svg></button>
          <button class="tool" aria-label="三点圆弧"><svg><use href="#arc3"/></svg></button><button class="tool" aria-label="扇形"><svg><use href="#pie"/></svg></button>
        </div>
        <div class="pair">
          <button class="tool" aria-label="移动"><svg><use href="#move"/></svg></button><button class="tool" aria-label="推拉"><svg><use href="#pushpull"/></svg></button>
          <button class="tool" aria-label="旋转"><svg><use href="#rotate"/></svg></button><button class="tool pressed" aria-label="路径跟随" aria-describedby="tip"><svg><use href="#follow"/></svg></button>
          <button class="tool" aria-label="缩放"><svg><use href="#scale"/></svg></button><button class="tool" aria-label="偏移"><svg><use href="#offset"/></svg></button>
        </div>
        <div class="pair">
          <button class="tool" aria-label="卷尺"><svg><use href="#tape"/></svg></button><button class="tool" aria-label="尺寸"><svg><use href="#dimension"/></svg></button>
          <button class="tool" aria-label="量角器"><svg><use href="#protractor"/></svg></button><button class="tool" aria-label="文字"><svg viewBox="0 0 28 28"><use href="#note"/><text class="note-text" x="11" y="14">A1</text></svg></button>
          <button class="tool" aria-label="轴"><svg><use href="#axes"/></svg></button><button class="tool" aria-label="三维文字"><svg><use href="#threed"/></svg></button>
        </div>
        <div class="pair">
          <button class="tool" aria-label="环绕观察"><svg><use href="#orbit"/></svg></button><button class="tool" aria-label="平移"><svg><use href="#pan"/></svg></button>
          <button class="tool" aria-label="视图缩放"><svg><use href="#zoom"/></svg></button><button class="tool" aria-label="缩放窗口"><svg><use href="#zoomwin"/></svg></button>
          <button class="tool" aria-label="充满视窗"><svg><use href="#extents"/></svg></button><button class="tool" aria-label="上一个"><svg><use href="#previous"/></svg></button>
        </div>
        <div class="pair">
          <button class="tool" aria-label="定位相机"><svg><use href="#person"/></svg></button><button class="tool" aria-label="绕轴旋转"><svg><use href="#eye"/></svg></button>
          <button class="tool" aria-label="漫游"><svg><use href="#walk"/></svg></button><button class="tool" aria-label="剖切面"><svg><use href="#section"/></svg></button>
        </div>
      </aside>

      <section class="viewport" aria-label="模型">
        <svg class="scene" viewBox="82 128 1050 663" preserveAspectRatio="xMinYMin slice">
          <g fill="none" stroke-width="1">
            <path d="M443 128l191 286" stroke="#b2202c" stroke-dasharray="1 3"/>
            <path d="M634 414L82 459" stroke="#2b9a33" stroke-dasharray="1 3"/>
            <path d="M634 414l-5 377" stroke="#2a2fa8" stroke-dasharray="1 3"/>
            <path d="M637 128l-3 286" stroke="#2222a8"/>
            <path d="M634 414l498-41" stroke="#28a22c"/>
            <path d="M634 414l254 377" stroke="#a81818"/>
          </g>
          <path d="M284 341l45-3 9 85-43 3z" fill="#b5c5d1" stroke="#000" stroke-width="1.600"/>
          <path d="M341 345l453-30 276 202-737 82z" fill="none" stroke="#000" stroke-width="1.600" stroke-linejoin="round"/>
          <g fill="#f93c3a">
            <path d="M383 210l-80 131-5-1-1 18 16-13-4-1z"/>
            <path d="M132 391l-48 33-3-3-4 16 19-5-4-2z"/>
            <path d="M933 693L687 565l2-4-19 0 11 14 3-3z"/>
          </g>
        </svg>
      </section>

      <aside class="tray">
        <div class="tray-title"><span>默认面板</span>
          <svg class="pin" viewBox="0 0 10 12"><path d="M2.500 6V1.500h5V6M1 6.500h8M5 7v4" fill="none" stroke="#111" stroke-width="1.300"/><path d="M6 1h2v5H6z"/></svg>
          <button class="tray-close" aria-label="关闭面板"><svg viewBox="0 0 12 12"><path d="M3 3l6 6M9 3L3 9" stroke="#fff" stroke-width="2"/></svg></button>
        </div>
        <div class="tray-body">
          <div class="panels">
            <div class="head open"><h2>图元信息</h2><button aria-label="关闭"><svg><use href="#x"/></svg></button></div>
            <div class="entity"><p>没有选择内容</p></div>
            <div class="head"><h2>材料</h2><button aria-label="关闭"><svg><use href="#x"/></svg></button></div>
            <div class="head"><h2>组件</h2><button aria-label="关闭"><svg><use href="#x"/></svg></button></div>
            <div class="head"><h2>风格</h2><button aria-label="关闭"><svg><use href="#x"/></svg></button></div>
            <div class="head"><h2>图层</h2><button aria-label="关闭"><svg><use href="#x"/></svg></button></div>
            <div class="head"><h2>阴影</h2><button aria-label="关闭"><svg><use href="#x"/></svg></button></div>
            <div class="head open"><h2>场景</h2><button aria-label="关闭"><svg><use href="#x"/></svg></button></div>
            <div class="scene-tools">
              <button aria-label="更新场景"><svg viewBox="0 0 16 16"><path d="M2 7c1-6 9-6 11-2M14 9c-1 6-9 6-11 2" fill="none" stroke="#888" stroke-width="1.600"/><path d="M15 2v5h-5zM1 14V9h5z" fill="#888"/></svg></button>
              <button aria-label="添加场景"><svg viewBox="0 0 16 16"><circle cx="8" cy="8" r="6.500" fill="none" stroke="#111" stroke-width="1.500"/><path d="M8 4v8M4 8h8" stroke="#111" stroke-width="2"/></svg></button>
              <button aria-label="删除场景"><svg viewBox="0 0 16 16"><circle cx="8" cy="8" r="6.800" fill="none" stroke="#888" stroke-width="1.300"/><path d="M4 8h8" stroke="#888" stroke-width="1.500"/></svg></button>
              <span class="spacer"></span>
              <button class="order" aria-label="下移"><svg viewBox="0 0 14 16"><path d="M10 3H7v9" fill="none" stroke="#777" stroke-width="1.800"/><path d="M4 9h6l-3 5z" fill="#777"/></svg></button>
              <button class="order" aria-label="上移"><svg viewBox="0 0 14 16"><path d="M4 13h3V4" fill="none" stroke="#777" stroke-width="1.800"/><path d="M4 7h6L7 2z" fill="#777"/></svg></button>
              <button class="view-options" aria-label="查看选项"><svg viewBox="0 0 22 16"><path d="M1 2h4v4H1zM1 11h4v4H1z" fill="none" stroke="#111" stroke-width="1.500"/><path d="M8 2h6M8 5h5M8 11h6M8 14h5" stroke="#333" stroke-width="1.500"/><path d="M17 7h5l-2.500 3z"/></svg></button>
              <button aria-label="隐藏详细信息"><svg viewBox="0 0 16 16"><path d="M4 1h9L8.500 5z"/><path d="M3 7h10v9H3z"/><path d="M8 9v5M5.500 11.500h5" stroke="#fff" stroke-width="1.500"/></svg></button>
              <button aria-label="菜单"><svg viewBox="0 0 16 16"><path d="M8 1l7 7-7 7z"/><path d="M2 4h7v8H2z" fill="#fff" stroke="#173c66" stroke-width="1.500"/><path d="M4 7h4M4 9h4" stroke="#3c82c3"/></svg></button>
            </div>
            <div class="scene-list"></div>
          </div>
          <div class="scrollbar"><i class="arrow-up"></i><i class="thumb"></i><i class="arrow-down"></i></div>
        </div>
      </aside>

      <div class="tooltip" id="tip" role="tooltip">
        <svg><use href="#follow"/></svg>
        <div><strong>路径跟随</strong><p>按所选平面路径跟随。</p></div>
      </div>
    </main>

    <footer class="status">
      <svg viewBox="0 0 16 16"><circle cx="8" cy="8" r="6.500" fill="none" stroke="#aaa"/><path d="M8 4a3 3 0 0 1 1.500 5L9 13H7l-.5-4A3 3 0 0 1 8 4z" fill="#aaa"/></svg>
      <svg viewBox="0 0 16 16"><circle cx="8" cy="8" r="6.800" fill="none" stroke="#111" stroke-width="1.300"/><path d="M8 6v6" stroke="#111" stroke-width="2.400"/><circle cx="8" cy="4" r="1.300"/></svg>
      <span class="status-sep"></span>
      <span class="message">按所选平面路径跟随。</span>
      <span class="status-sep"></span>
      <label for="distance">距离</label>
      <input id="distance" type="text">
      <i class="grip-corner"></i>
    </footer>
  </div>

  <div class="watermark">
    <svg viewBox="0 0 62 82"><g fill="none" stroke="#cdcfd2" stroke-linecap="round"><path d="M16 13c8 3 14-2 22 2 8 3 13-4 22-11" stroke-width="2"/><path d="M18 12c2-4 4-6 1-10M23 11c3-3 4-6 2-10M30 11c4-3 5-6 4-10M42 14c5-2 6-5 5-10" stroke-width="1.800"/></g><path d="M4 9c2 2 5 3 8 3l5 1c2 3 4 5 7 8l-5 2-4 1c-2 8 1 14 9 16 9 3 18 3 24 7 4 3 4 7 2 11l2 21-4 3 1-3-3-14-3-6 0 22h-5l3-3-2-20c-10 3-17 2-24-2-3 7-5 15-4 25h-6l2-3c1-10 0-19-2-27C-1 44-1 37 5 28c3-5 3-9 3-13z" fill="#cdcfd2"/></svg>
    <div class="brand"><span class="brand-cn">3D溜溜网</span><span class="brand-en">3D66.COM</span></div>
  </div>
</div>
</body>
</html>
```
FILE: styles.css
```css
* { box-sizing: border-box; }
body {
  margin: 0;
  font-family: "Noto Sans", "Noto Sans CJK SC", sans-serif;
  font-size: 12px;
  color: #111;
  background: #2b3542;
}
button { margin: 0; padding: 0; border: 0; background: none; font: inherit; color: inherit; }
h1, h2, p { margin: 0; font-size: inherit; font-weight: normal; }
.sprite { position: absolute; width: 0; height: 0; }
.note-text { font: 10px "Liberation Serif", serif; }

.window {
  position: relative;
  display: flex;
  flex-direction: column;
  height: 100vh;
  min-height: 700px;
  padding: 0 7px 7px;
  border: 1px solid #3b4a5c;
  border-radius: 7px 7px 6px 6px;
  overflow: hidden;
  background: linear-gradient(#d3e5f8 0, #dbe9f8 224px, #a7c6e6 228px, #b4d0ea 100%);
}
.titlebar {
  position: relative;
  display: flex;
  align-items: center;
  height: 28px;
  margin: 0 -7px;
  padding-left: 7px;
  overflow: hidden;
  border-top: 1px solid #eef6fd;
  background: linear-gradient(90deg, #dceafa 0, #d5e6f9aa 180px, transparent 360px), linear-gradient(#bbdcff, #a3c7ea);
}
.app-icon { width: 16px; height: 16px; margin-right: 5px; }
.title { flex: 1; line-height: 26px; }
.smudge { position: absolute; top: -4px; height: 10px; filter: blur(3px); }
.smudge-red { left: 352px; width: 36px; background: #ad4c66; }
.smudge-red-end { left: 410px; width: 34px; }
.smudge-blue { left: 389px; width: 22px; background: #4d6ecf; }
.smudge-dark { height: 7px; background: #5a6b8c; }
.s1 { left: 795px; width: 48px; }
.s2 { left: 870px; width: 50px; }
.s3 { left: 945px; width: 44px; }
.s4 { left: 1028px; width: 20px; }
.s5 { left: 1076px; width: 18px; height: 14px; }
.caption-buttons {
  position: relative;
  display: flex;
  align-self: flex-start;
  height: 19px;
  margin-right: 6px;
  border: 1px solid #45566b;
  border-top: 0;
  border-radius: 0 0 5px 5px;
  overflow: hidden;
}
.cap { display: grid; place-items: center; width: 27px; background: linear-gradient(#dbe9f7 45%, #a8c1dc 50%, #c7dcf0); border-right: 1px solid #60738a; }
.cap svg { width: 14px; height: 10px; }
.cap-close { width: 47px; border: 0; background: linear-gradient(#e3a394 40%, #c33c27 50%, #d96a4c); }

.client { flex: 1; min-height: 0; display: flex; flex-direction: column; border: 1px solid #425e78; background: #f0f0f0; overflow: hidden; }
.menubar { display: flex; gap: 15px; height: 18px; flex: none; padding-left: 6px; background: linear-gradient(#fff 15%, #e4e8f4 50%, #d5dcef); }
.menubar button { white-space: nowrap; line-height: 20px; }

.toolbar { display: flex; flex: none; height: 39px; border-top: 1px solid #aaa; overflow: hidden; }
.group { display: flex; flex: none; align-items: center; padding: 0 2px 0 9px; border-right: 1px solid #aaa; position: relative; }
.group::before { content: ""; position: absolute; left: 4px; top: 4px; bottom: 2px; border-left: 2px dotted #b4b4b4; }
.tool { display: grid; place-items: center; flex: none; width: 34px; height: 34px; }
.tool svg { width: 28px; height: 28px; }
.group .pressed { border: 1px solid #666; border-radius: 4px; background: #ddd; }
.sep { flex: none; width: 1px; height: 30px; margin: 0 4px 0 3px; background: #777; }
.more { width: 22px; height: 34px; display: grid; place-items: center; }
.more::before { content: ""; border: 6px solid transparent; border-top-color: #000; border-bottom: 0; }
.group-snug .tool:last-child { width: 30px; }

.sliders { display: flex; gap: 18px; padding: 0 10px 0 7px; }
.slider { width: 143px; }
.range { display: block; width: 100%; height: 15px; margin: 0; appearance: none; background: none; }
.range::-webkit-slider-runnable-track { height: 8px; border: 1px solid #777; border-width: 2px 0 0 1px; }
.range-month::-webkit-slider-runnable-track { background: linear-gradient(90deg, #fff6ee, #f2c04b 32%, #ef7d22 50%, #d8130c 68%, #ee6d68 84%, #f8dede); }
.range-time::-webkit-slider-runnable-track { background: linear-gradient(90deg, #e6f1f6, #9dbdd0 25%, #6a83d8 55%, #4353bd 72%, #151c3e 90%, #05060c); }
.range::-webkit-slider-thumb { appearance: none; width: 5px; height: 14px; margin-top: -3px; background: #fafafa; border: 1px solid #ddd; border-color: #eee #999 #999 #eee; }
.ticks, .times { font: 10px/12px "Liberation Sans", "Noto Sans CJK SC", sans-serif; color: #000; }
.ticks { display: grid; grid-template-columns: repeat(12, 1fr); text-align: center; }
.times { display: flex; justify-content: space-between; }

.layer { display: flex; align-items: center; width: 147px; height: 20px; margin: 0 2px 0 1px; background: #fff; }
.layer-check { width: 12px; height: 12px; margin-left: 5px; }
.layer select { flex: 1; min-width: 0; height: 20px; padding: 0 7px; border: 0; appearance: none; background: none; font: 11px "Noto Sans", sans-serif; color: #111; }
.layer-arrow { display: grid; place-items: center; width: 14px; height: 20px; border: 1px solid #444; background: #f0f0f0; }
.layer-arrow::before { content: ""; border: 4px solid transparent; border-top-color: #000; border-bottom: 0; }

.workspace { position: relative; display: flex; flex: 1; min-height: 0; border-top: 1px solid #888; }
.palette { flex: none; width: 71px; padding: 9px 1px 0; position: relative; border-top: 1px solid #fff; }
.palette::before { content: ""; position: absolute; left: 4px; right: 6px; top: 4px; border-top: 2px dotted #b4b4b4; }
.pair { display: grid; grid-template-columns: 34px 34px; }
.pair + .pair { padding-top: 8px; background: linear-gradient(#777, #777) 2px 4px / 64px 1px no-repeat; }
.palette .pressed { border: 1px solid #555; border-radius: 4px; background: linear-gradient(#cfcfcf, #e6e6e6); }
.viewport { position: relative; z-index: 1; flex: 1; min-width: 0; border: 2px solid #7b7b79; border-width: 1px 0 0 2px; background: #cdcec9; }
.scene { position: absolute; inset: 0; width: 100%; height: 100%; overflow: visible; }
.tooltip {
  position: absolute; z-index: 2; left: 59px; top: 331px;
  display: flex; gap: 8px; padding: 2px 4px 4px 7px;
  border: 1px solid #767676; border-radius: 3px;
  background: linear-gradient(#fff, #e4e5f0); color: #575757;
}
.tooltip svg { width: 20px; height: 20px; margin-top: 5px; }
.tooltip strong { display: block; font-size: 13px; line-height: 17px; border-bottom: 1px solid #666; color: #555; }
.tooltip p { line-height: 17px; white-space: nowrap; }

.tray { position: relative; z-index: 1; display: flex; flex-direction: column; flex: none; width: 285px; padding-left: 5px; background: #f0f0f0; }
.tray-title { display: flex; align-items: center; height: 18px; flex: none; padding: 0 3px 0 4px; background: linear-gradient(90deg, #bfcddc, #d6e2ee); color: #4c5c70; line-height: 16px; }
.tray-title span { flex: 1; }
.pin { width: 8px; height: 10px; margin-right: 8px; }
.tray-close { display: grid; place-items: center; width: 14px; height: 14px; border: 1px solid #6c2c35; border-radius: 2px; background: #b45a62; }
.tray-close svg { width: 10px; height: 10px; }
.tray-body { flex: 1; min-height: 0; display: flex; }
.panels { flex: 1; display: flex; flex-direction: column; }
.head { display: flex; align-items: center; flex: none; height: 18px; margin-bottom: 1px; padding: 0 3px 0 9px; border: 1px solid #aaa; border-width: 1px 1px 0 1px; background: linear-gradient(#e8e8e8, #b3b3b3); line-height: 17px; }
.head::before { content: ""; width: 0; margin-right: 6px; border: 4px solid transparent; border-left: 6px solid #000; border-right: 0; }
.head.open::before { margin: 0 5px 0 -1px; border: 4px solid transparent; border-top: 6px solid #000; border-bottom: 0; }
.head h2 { flex: 1; }
.head button { display: grid; place-items: center; width: 12px; height: 12px; border: 1px solid #555; border-radius: 2px; background: #f4f4f4; }
.head svg { width: 11px; height: 11px; }
.entity { flex: none; height: 178px; padding: 2px 1px 0 4px; }
.entity p { padding-left: 4px; font-weight: bold; font-size: 13px; line-height: 24px; border-bottom: 1px solid #999; color: #000; }
.scene-tools { display: flex; align-items: center; flex: none; height: 26px; gap: 7px; padding: 0 4px 0 6px; border-bottom: 1px solid #999; }
.scene-tools button { display: grid; width: 16px; height: 16px; }
.scene-tools svg { width: 100%; height: 16px; }
.scene-tools .order { width: 14px; }
.scene-tools .view-options { width: 22px; margin-right: -4px; }
.spacer { flex: 1; }
.scene-list { flex: 1; background: #fff; }
.scrollbar { display: flex; flex-direction: column; align-items: center; width: 17px; flex: none; background: #ececec; border-left: 1px solid #f8f8f8; }
.arrow-up { margin: 8px 0 6px; border: 3px solid transparent; border-bottom: 4px solid #333; border-top: 0; }
.thumb { width: 14px; height: 15px; border: 1px solid #909090; border-radius: 2px; background: linear-gradient(90deg, #f7f7f7, #cfcfcf); }
.arrow-down { margin: auto 0 5px; border: 3px solid transparent; border-top: 4px solid #333; border-bottom: 0; }

.status { display: flex; align-items: center; flex: none; height: 27px; padding: 0 4px 0 4px; border-top: 1px solid #ddd; font-size: 15px; }
.status > svg { width: 16px; height: 16px; margin-right: 14px; }
.status-sep { width: 1px; height: 9px; background: #888; margin: 0 9px 0 -2px; }
.message { flex: 1; line-height: 26px; }
.status label { line-height: 26px; }
.status input { width: 200px; height: 23px; margin: 0 10px 0 9px; border: 1px solid #b0b9c9; background: #f0f0f0; }
.grip-corner { align-self: flex-end; width: 8px; height: 8px; margin-bottom: 2px; background: radial-gradient(circle, #aaa 1px, transparent 1px) 0 0 / 4px 4px; clip-path: polygon(100% 0, 100% 100%, 0 100%); }

.watermark {
  position: absolute; z-index: 3; right: 70px; bottom: 26px;
  display: flex; gap: 11px; width: 267px; height: 137px; padding: 24px 0 0 9px;
  background: #213056; color: #cdcfd2;
}
.watermark > svg { flex: none; width: 62px; height: 82px; }
.brand { display: flex; flex-direction: column; white-space: nowrap; }
.brand-cn { font: 600 41px/56px "Inter", "Noto Sans CJK SC", sans-serif; }
.brand-en { font: 33px/26px "Inter", sans-serif; }
```
